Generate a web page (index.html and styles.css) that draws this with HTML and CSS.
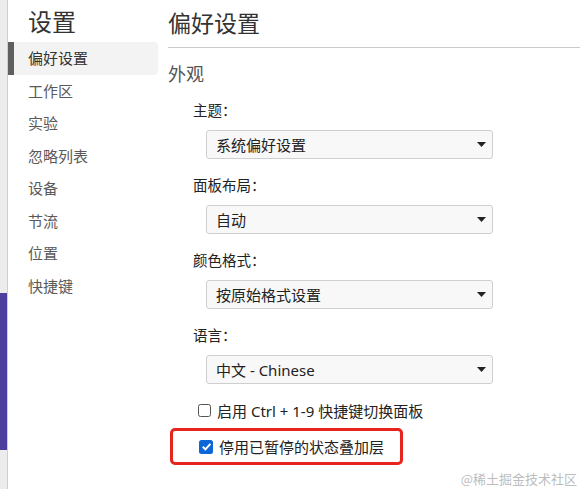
FILE: index.html
```html
<!DOCTYPE html>
<html lang="zh">
<head>
<meta charset="utf-8">
<link rel="stylesheet" href="styles.css">
</head>
<body>
<div class="strip">
  <div class="strip-top"></div>
  <div class="strip-mid"></div>
  <div class="strip-bot"></div>
</div>
<nav class="sidebar">
  <div class="side-title">设置</div>
  <div class="side-item active">偏好设置</div>
  <div class="side-item">工作区</div>
  <div class="side-item">实验</div>
  <div class="side-item">忽略列表</div>
  <div class="side-item">设备</div>
  <div class="side-item">节流</div>
  <div class="side-item">位置</div>
  <div class="side-item">快捷键</div>
</nav>
<main class="main">
  <h1 class="page-title">偏好设置</h1>
  <h2 class="section-title">外观</h2>
  <div class="field">
    <div class="label">主题：</div>
    <div class="select"><span>系统偏好设置</span><svg class="arrow" width="9" height="5" viewBox="0 0 9 5"><path d="M0 0h9L4.5 5z" fill="#222"/></svg></div>
  </div>
  <div class="field">
    <div class="label">面板布局：</div>
    <div class="select"><span>自动</span><svg class="arrow" width="9" height="5" viewBox="0 0 9 5"><path d="M0 0h9L4.5 5z" fill="#222"/></svg></div>
  </div>
  <div class="field">
    <div class="label">颜色格式：</div>
    <div class="select"><span>按原始格式设置</span><svg class="arrow" width="9" height="5" viewBox="0 0 9 5"><path d="M0 0h9L4.5 5z" fill="#222"/></svg></div>
  </div>
  <div class="field">
    <div class="label">语言：</div>
    <div class="select"><span>中文 - Chinese</span><svg class="arrow" width="9" height="5" viewBox="0 0 9 5"><path d="M0 0h9L4.5 5z" fill="#222"/></svg></div>
  </div>
  <div class="check-row">
    <span class="box"></span><span>启用 Ctrl + 1-9 快捷键切换面板</span>
  </div>
  <div class="highlight">
    <div class="check-row inner">
      <span class="box checked"><svg width="11" height="11" viewBox="0 0 11 11"><path d="M1.8 5.8l2.6 2.6L9.4 2.8" fill="none" stroke="#fff" stroke-width="2"/></svg></span><span>停用已暂停的状态叠加层</span>
    </div>
  </div>
</main>
<div class="watermark">@稀土掘金技术社区</div>
</body>
</html>
```
FILE: styles.css
```css
html, body {
  margin: 0;
  padding: 0;
}
body {
  width: 580px;
  height: 489px;
  overflow: hidden;
  display: flex;
  background: #fff;
  font-family: "Noto Sans", "Noto Sans CJK SC", sans-serif;
  color: #222;
  position: relative;
}
.strip {
  width: 7px;
  border-right: 1px solid #cfcfcf;
  display: flex;
  flex-direction: column;
  flex-shrink: 0;
}
.strip-top {
  height: 293px;
  background: #ececec;
}
.strip-mid {
  height: 157px;
  background: #4c3f9d;
}
.strip-bot {
  flex: 1;
  background: #ececec;
}
.sidebar {
  width: 150px;
  flex-shrink: 0;
}
.side-title {
  height: 42px;
  line-height: 44px;
  font-size: 24px;
  padding-left: 20px;
  color: #333;
}
.side-item {
  height: 32.5px;
  line-height: 32px;
  font-size: 15px;
  padding-left: 20px;
  color: #5a5a5a;
  box-sizing: border-box;
}
.side-item.active {
  background: #f3f3f3;
  border-left: 6px solid #5f5f5f;
  padding-left: 14px;
  border-radius: 0 4px 4px 0;
  color: #333;
}
.main {
  flex: 1;
  padding-left: 10px;
}
.page-title {
  margin: 0;
  height: 47px;
  line-height: 46px;
  font-size: 23px;
  font-weight: normal;
  color: #333;
  border-bottom: 1px solid #cacaca;
}
.section-title {
  margin: 0;
  height: 52px;
  line-height: 52px;
  font-size: 18px;
  font-weight: normal;
  color: #555;
}
.field {
  height: 75px;
  padding-left: 25px;
}
.label {
  height: 20px;
  line-height: 20px;
  font-size: 14.5px;
  color: #222;
  margin-top: 0;
}
.select {
  margin-top: 10px;
  margin-left: 13px;
  width: 287px;
  height: 29px;
  box-sizing: border-box;
  border: 1px solid #cfcfcf;
  border-radius: 3px;
  background: #f8f8f8;
  display: flex;
  align-items: center;
  justify-content: space-between;
  padding: 0 6px 0 9px;
  font-size: 15px;
  color: #222;
}
.arrow {
  display: block;
}
.check-row {
  display: flex;
  align-items: center;
  gap: 6px;
  padding-left: 30px;
  height: 24px;
  margin-top: -2px;
  font-size: 15px;
  color: #222;
}
.box {
  width: 13px;
  height: 13px;
  box-sizing: border-box;
  border: 1.5px solid #555;
  border-radius: 2.5px;
  display: flex;
  align-items: center;
  justify-content: center;
}
.box.checked {
  border: none;
  background: #0b66d8;
  width: 14px;
  height: 14px;
}
.highlight {
  margin-top: 6px;
  width: 233px;
  height: 37px;
  box-sizing: border-box;
  border: 3px solid #e8241f;
  border-radius: 5px;
  margin-left: 2px;
  display: flex;
  align-items: center;
}
.check-row.inner {
  padding-left: 26px;
  margin-top: 0;
}
.watermark {
  position: absolute;
  right: 3px;
  bottom: 1px;
  font-size: 13px;
  color: #bdbdbd;
  font-family: "Noto Sans CJK SC", sans-serif;
}
```
